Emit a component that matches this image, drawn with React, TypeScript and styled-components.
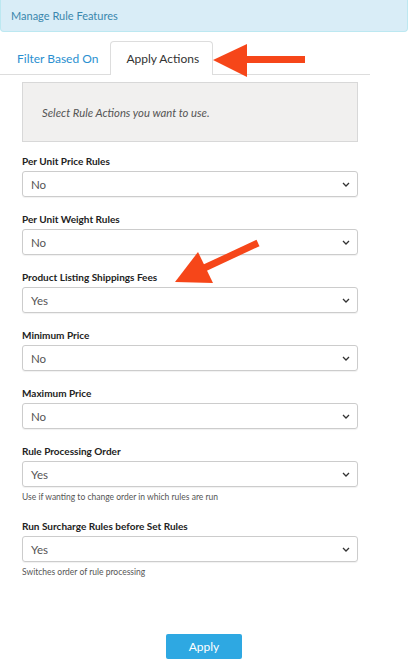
import React from "react";
import styled, { createGlobalStyle } from "styled-components";

const GlobalStyle = createGlobalStyle`
  html, body {
    margin: 0;
    padding: 0;
    background: #ffffff;
    font-family: Lato, "Open Sans", Arial, sans-serif;
  }
`;

const Page = styled.div`
  position: relative;
  width: 408px;
  min-height: 665px;
  background: #ffffff;
`;

const InfoBar = styled.div`
  height: 31px;
  display: flex;
  align-items: center;
  padding-left: 10px;
  background: #d9edf7;
  border: 1px solid #bce8f1;
  border-top: none;
  border-radius: 0 0 4px 4px;
  color: #3a87ad;
  font-size: 11px;
`;

const Panel = styled.div`
  width: 370px;
  margin-top: 9px;
`;

const TabBar = styled.div`
  display: flex;
  height: 33px;
  border-bottom: 1px solid #dddddd;
`;

const Tab = styled.div<{ active?: boolean }>`
  display: flex;
  align-items: center;
  box-sizing: border-box;
  font-size: 12px;
  padding: 0 ${p => (p.active ? "13px" : "11px")} 0 ${p => (p.active ? "15px" : "16px")};
  color: ${p => (p.active ? "#333333" : "#2a8fd0")};
  background: #ffffff;
  border: 1px solid ${p => (p.active ? "#dddddd" : "transparent")};
  border-bottom: none;
  border-radius: 4px 4px 0 0;
  margin-bottom: ${p => (p.active ? "-1px" : "0")};
  height: ${p => (p.active ? "34px" : "33px")};
`;

const Content = styled.div`
  padding: 7px 12px 0 22px;
`;

const Notice = styled.div`
  height: 58px;
  display: flex;
  align-items: center;
  padding-left: 19px;
  background: #f1f0ef;
  border: 1px solid #d8d8d8;
  color: #555555;
  font-style: italic;
  font-size: 11.3px;
  margin-bottom: 12px;
`;

const Field = styled.div<{ hasHelp?: boolean }>`
  display: flex;
  flex-direction: column;
  margin-bottom: ${p => (p.hasHelp ? "16px" : "15px")};
`;

const Label = styled.div`
  font-size: 10px;
  font-weight: 700;
  color: #222222;
  line-height: 14px;
  margin-bottom: 3px;
`;

const SelectBox = styled.div`
  height: 26px;
  box-sizing: border-box;
  display: flex;
  align-items: center;
  justify-content: space-between;
  padding: 0 7px 0 8px;
  border: 1px solid #cccccc;
  border-radius: 3px;
  box-shadow: 0 1px 1px rgba(0, 0, 0, 0.06);
  color: #555555;
  font-size: 11.5px;
`;

const Help = styled.div`
  font-size: 8.5px;
  color: #555555;
  line-height: 11px;
  margin-top: 5px;
`;

const ButtonRow = styled.div`
  display: flex;
  justify-content: center;
  padding-top: 40px;
`;

const ApplyButton = styled.button`
  width: 76px;
  height: 25px;
  border: none;
  border-radius: 2px;
  background: #2ea8e2;
  color: #ffffff;
  font-family: Lato, "Open Sans", Arial, sans-serif;
  font-size: 12px;
`;

const ArrowLayer = styled.svg`
  position: absolute;
  left: 0;
  top: 0;
  pointer-events: none;
`;

const Chevron = () => (
  <svg width="8" height="5" viewBox="0 0 8 5">
    <path d="M1 1 L4 4 L7 1" fill="none" stroke="#333" strokeWidth="1.3" />
  </svg>
);

const fields: { label: string; value: string; help?: string }[] = [
  { label: "Per Unit Price Rules", value: "No" },
  { label: "Per Unit Weight Rules", value: "No" },
  { label: "Product Listing Shippings Fees", value: "Yes" },
  { label: "Minimum Price", value: "No" },
  { label: "Maximum Price", value: "No" },
  { label: "Rule Processing Order", value: "Yes", help: "Use if wanting to change order in which rules are run" },
  { label: "Run Surcharge Rules before Set Rules", value: "Yes", help: "Switches order of rule processing" },
];

export default function App() {
  return (
    <Page>
      <GlobalStyle />
      <InfoBar>Manage Rule Features</InfoBar>
      <Panel>
        <TabBar>
          <Tab>Filter Based On</Tab>
          <Tab active>Apply Actions</Tab>
        </TabBar>
        <Content>
          <Notice>Select Rule Actions you want to use.</Notice>
          {fields.map(f => (
            <Field key={f.label} hasHelp={!!f.help}>
              <Label>{f.label}</Label>
              <SelectBox>
                <span>{f.value}</span>
                <Chevron />
              </SelectBox>
              {f.help && <Help>{f.help}</Help>}
            </Field>
          ))}
        </Content>
      </Panel>
      <ButtonRow>
        <ApplyButton>Apply</ApplyButton>
      </ButtonRow>
      <ArrowLayer width="408" height="665" viewBox="0 0 408 665">
        <rect x="246" y="56" width="59" height="7" fill="#f64619" />
        <polygon points="213,60 247,44 247,77" fill="#f64619" />
        <line x1="258" y1="243" x2="200" y2="270" stroke="#f64619" strokeWidth="7" />
        <polygon points="175,282 198,252 213,283" fill="#f64619" />
      </ArrowLayer>
    </Page>
  );
}
